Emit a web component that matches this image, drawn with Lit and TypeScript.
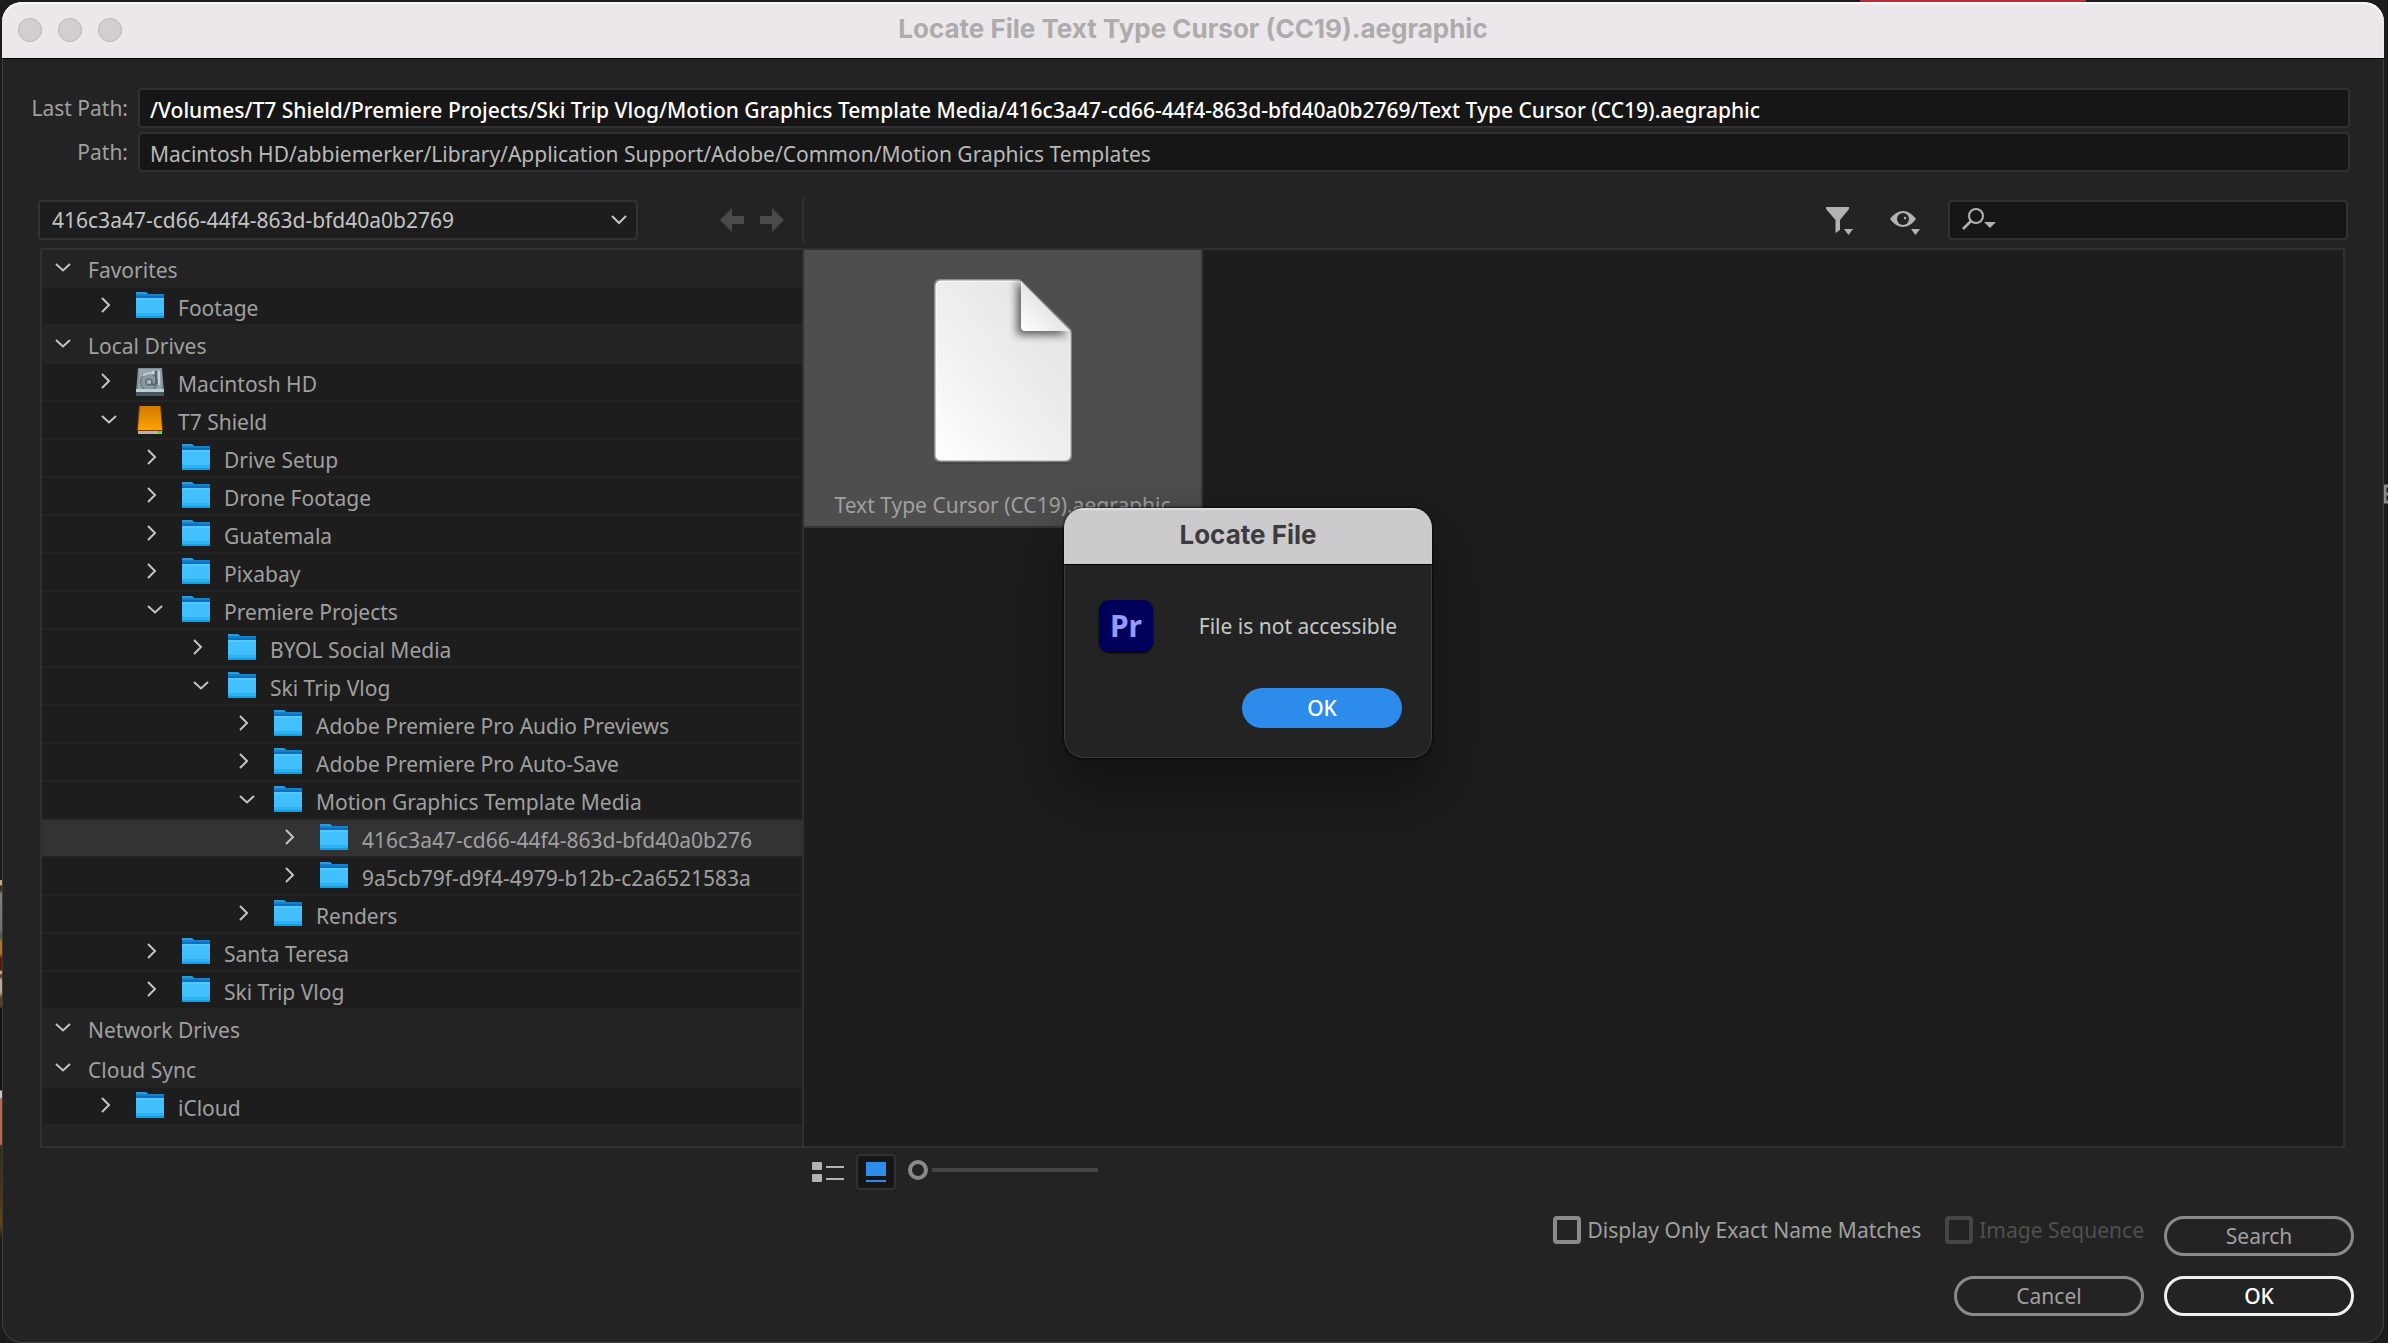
import { LitElement, html, css, svg, nothing } from "lit";
import { customElement, property, state } from "lit/decorators.js";
import { classMap } from "lit/directives/class-map.js";
import { styleMap } from "lit/directives/style-map.js";

type IconKind = "folder" | "disk" | "shield";

interface Entry {
  label: string;
  depth: number;
  open?: boolean;
  icon?: IconKind;
  selected?: boolean;
  spaced?: boolean;
}

const ENTRIES: Entry[] = [
  { label: "Favorites", depth: 0, open: true },
  { label: "Footage", depth: 1, icon: "folder" },
  { label: "Local Drives", depth: 0, open: true },
  { label: "Macintosh HD", depth: 1, icon: "disk" },
  { label: "T7 Shield", depth: 1, open: true, icon: "shield" },
  { label: "Drive Setup", depth: 2, icon: "folder" },
  { label: "Drone Footage", depth: 2, icon: "folder" },
  { label: "Guatemala", depth: 2, icon: "folder" },
  { label: "Pixabay", depth: 2, icon: "folder" },
  { label: "Premiere Projects", depth: 2, open: true, icon: "folder" },
  { label: "BYOL Social Media", depth: 3, icon: "folder" },
  { label: "Ski Trip Vlog", depth: 3, open: true, icon: "folder" },
  { label: "Adobe Premiere Pro Audio Previews", depth: 4, icon: "folder" },
  { label: "Adobe Premiere Pro Auto-Save", depth: 4, icon: "folder" },
  { label: "Motion Graphics Template Media", depth: 4, open: true, icon: "folder" },
  { label: "416c3a47-cd66-44f4-863d-bfd40a0b276", depth: 5, icon: "folder", selected: true },
  { label: "9a5cb79f-d9f4-4979-b12b-c2a6521583a", depth: 5, icon: "folder" },
  { label: "Renders", depth: 4, icon: "folder" },
  { label: "Santa Teresa", depth: 2, icon: "folder" },
  { label: "Ski Trip Vlog", depth: 2, icon: "folder" },
  { label: "Network Drives", depth: 0, open: true, spaced: true },
  { label: "Cloud Sync", depth: 0, open: true },
  { label: "iCloud", depth: 1, icon: "folder" },
];

const folderIcon = html`
  <svg width="28" height="26" viewBox="0 0 28 26" aria-hidden="true">
    <path d="M0 0H10L12 2H28V26H0Z" fill="#1383cc" />
    <path d="M0 0H10L12 2H0Z" fill="#2b9bdc" />
    <rect y="4" width="28" height="2" fill="#0b6fc4" />
    <rect y="6" width="28" height="18" fill="#41c0fd" />
    <rect y="6" width="28" height="2" fill="#58c8fb" />
    <rect y="21" width="28" height="3" fill="#2bb2f5" />
    <rect y="24" width="28" height="2" fill="#109fe2" />
  </svg>
`;

const diskIcon = html`
  <svg width="28" height="28" viewBox="0 0 28 28" aria-hidden="true">
    <path d="M2 0H26L28 24H0Z" fill="#7d8b93" />
    <path d="M3 1H25L26 23H2Z" fill="#98a6ae" />
    <circle cx="13" cy="14" r="8.5" fill="#8b9aa2" stroke="#697780" stroke-width="1.5" />
    <path d="M7 8A9 9 0 0 1 17 6" fill="none" stroke="#c6d2d8" stroke-width="1.5" />
    <circle cx="13" cy="14" r="3" fill="#aab8bf" stroke="#5f6d75" stroke-width="1.5" />
    <path d="M20 3V14Q20 18 15 16" fill="none" stroke="#56636b" stroke-width="2" />
    <path d="M17 3V6M23 3V17" stroke="#d5dfe4" stroke-width="1.5" />
    <rect y="21" width="28" height="3" fill="#b4d0da" />
    <rect y="24" width="28" height="4" fill="#4b545a" />
  </svg>
`;

const shieldIcon = html`
  <svg width="28" height="28" viewBox="0 0 28 28" aria-hidden="true">
    <defs>
      <linearGradient id="amber" x1="0" y1="0" x2="0" y2="1">
        <stop offset="0" stop-color="#cf7800" />
        <stop offset="1" stop-color="#ffa300" />
      </linearGradient>
    </defs>
    <path d="M3 0H25L27 24H1Z" fill="#7d4a05" />
    <path d="M4 0H24L26 24H2Z" fill="url(#amber)" />
    <rect x="1" y="24" width="26" height="1" fill="#7a3d00" />
    <rect x="2" y="25" width="24" height="3" fill="#b9b2a6" />
    <rect x="22" y="25" width="3" height="2" fill="#2fdc2f" />
  </svg>
`;

const ICONS = { folder: folderIcon, disk: diskIcon, shield: shieldIcon };

const caret = (x: number, y: number, w: number, h: number) =>
  svg`<path d="M${x} ${y}H${x + w}L${x + w / 2} ${y + h}Z" fill="#b2b2b2" />`;

@customElement("folder-tree")
export class FolderTree extends LitElement {
  @property({ attribute: false }) entries: Entry[] = [];

  static styles = css`
    :host {
      display: block;
      background: #232323;
    }
    .list {
      list-style: none;
      margin: 0;
      padding: 0;
    }
    .row {
      box-sizing: border-box;
      height: 38px;
      border-bottom: 2px solid #232323;
      background: #1d1d1d;
      background-clip: padding-box;
      display: flex;
      align-items: center;
    }
    .heading {
      background: #232323;
    }
    .spaced {
      margin-bottom: 2px;
    }
    .selected {
      background: #333;
      background-clip: padding-box;
    }
    .toggle {
      flex: none;
      width: 16px;
      height: 34px;
      margin: 0 0 2px 13px;
      padding: 0;
      border: 0;
      background: none;
      display: flex;
      align-items: center;
    }
    .name {
      display: flex;
      align-items: center;
      gap: 14px;
      margin-left: 19px;
      min-width: 0;
      color: #a0a0a0;
      font-size: 21px;
      line-height: 32px;
      white-space: nowrap;
    }
    .heading .name {
      margin-left: 17px;
    }
    .text {
      padding-top: 4px;
    }
    .glyph {
      width: 28px;
      height: 28px;
      display: flex;
      align-items: flex-start;
    }
  `;

  render() {
    return html`
      <ul class="list" role="tree">
        ${this.entries.map(
          (e) => html`
            <li
              role="treeitem"
              aria-selected=${e.selected ? "true" : "false"}
              class=${classMap({
                row: true,
                heading: e.depth === 0,
                selected: !!e.selected,
                spaced: !!e.spaced,
              })}
              style=${styleMap({ paddingLeft: `${e.depth * 46}px` })}
            >
              <button class="toggle" aria-label=${`${e.open ? "Collapse" : "Expand"} ${e.label}`}>
                <svg width="16" height="16" viewBox="0 0 16 16" fill="none" stroke="#c4c4c4" stroke-width="2">
                  <path d=${e.open ? "M1 5L8 11.500L15 5" : "M1 1L8 8L1 15"} />
                </svg>
              </button>
              <span class="name">
                ${e.icon ? html`<span class="glyph">${ICONS[e.icon]}</span>` : nothing}
                <span class="text">${e.label}</span>
              </span>
            </li>
          `,
        )}
      </ul>
    `;
  }
}

@customElement("alert-dialog")
export class AlertDialog extends LitElement {
  static styles = css`
    :host {
      display: block;
      width: 368px;
      border-radius: 20px;
      background: #232323;
      box-shadow: 0 0 2px 1px rgba(0, 0, 0, 0.6), 0 30px 60px 10px rgba(0, 0, 0, 0.35);
      overflow: hidden;
    }
    .bar {
      height: 57px;
      box-sizing: border-box;
      margin: 0;
      padding-bottom: 2px;
      display: flex;
      align-items: center;
      justify-content: center;
      background: #cdcacd;
      box-shadow: inset 0 2px 1px #dedcde;
      border-bottom: 1px solid #000;
      color: #3d3b3d;
      font: 700 26px/32px Inter, sans-serif;
    }
    .content {
      box-sizing: border-box;
      height: 193px;
      padding: 35px 29px 29px 34px;
      border: 1px solid #3a3a3a;
      border-top: 0;
      border-radius: 0 0 20px 20px;
      display: flex;
      flex-direction: column;
      justify-content: space-between;
    }
    .message {
      display: flex;
      align-items: center;
      justify-content: space-between;
      padding-right: 5px;
      color: #c8c8c8;
      font-size: 21px;
      line-height: 32px;
    }
    .logo {
      width: 54px;
      height: 52px;
      border-radius: 10px;
      background: #00005b;
      box-shadow: 0 1px 2px #000;
      color: #9999ff;
      display: flex;
      align-items: center;
      justify-content: center;
      font-size: 30px;
      font-weight: 700;
    }
    .ok {
      align-self: flex-end;
      width: 160px;
      height: 40px;
      border: 0;
      border-radius: 20px;
      background: #2d8ceb;
      color: #fff;
      font: 500 21px/32px "Noto Sans", sans-serif;
    }
  `;

  render() {
    return html`
      <h2 class="bar">Locate File</h2>
      <div class="content">
        <div class="message">
          <span class="logo">Pr</span>
          <span>File is not accessible</span>
        </div>
        <button class="ok">OK</button>
      </div>
    `;
  }
}

@customElement("app-root")
export class AppRoot extends LitElement {
  @state() private lastPath =
    "/Volumes/T7 Shield/Premiere Projects/Ski Trip Vlog/Motion Graphics Template Media/416c3a47-cd66-44f4-863d-bfd40a0b2769/Text Type Cursor (CC19).aegraphic";
  @state() private path =
    "Macintosh HD/abbiemerker/Library/Application Support/Adobe/Common/Motion Graphics Templates";

  static styles = css`
    :host {
      display: block;
      position: relative;
      box-sizing: border-box;
      min-height: 100vh;
      padding: 2px 4px 0 2px;
      background: #1b1b1b;
      font-family: "Noto Sans", sans-serif;
      font-size: 21px;
      line-height: 32px;
      color: #a0a0a0;
    }
    .behind {
      position: absolute;
      top: 0;
      left: 1860px;
      width: 226px;
      height: 30px;
      background: #b82d38;
    }
    .preview {
      position: absolute;
      top: 880px;
      left: 0;
      width: 2px;
      height: 370px;
      background: linear-gradient(
        #c9a878 0 5px,
        #3a2a1c 6px 10px,
        #7c8278 14px,
        #6e756c 50px,
        #44564c 56px,
        #b07428 62px 74px,
        #5a1a08 78px 90px,
        #d8c8a8 92px,
        #5a2a10 96px,
        #b8a8a0 100px 112px,
        #b08830 114px,
        #5a3a30 118px 127px,
        #141414 128px 210px,
        #c8c8c8 211px 217px,
        #c0664a 219px 264px,
        #3a2c20 266px,
        #4a3014 310px,
        #6a4414 342px,
        #1b1b1b 360px
      );
    }
    .edge {
      position: absolute;
      top: 484px;
      right: 0;
    }
    .window {
      position: relative;
      box-sizing: border-box;
      min-height: calc(100vh - 2px);
      border-radius: 20px;
      background: #232323;
      box-shadow: inset 0 0 0 1px #3c3c3c;
      display: flex;
      flex-direction: column;
    }
    .titlebar {
      box-sizing: border-box;
      height: 57px;
      border-bottom: 1px solid #000;
      border-radius: 20px 20px 0 0;
      background: #ece7eb;
      box-shadow: inset 0 2px 1px #fbf8fa;
      display: grid;
      grid-template-columns: 1fr auto 1fr;
      align-items: center;
      padding: 0 16px;
    }
    .lights {
      display: flex;
      gap: 16px;
    }
    .light {
      box-sizing: border-box;
      width: 24px;
      height: 24px;
      padding: 0;
      border: 1px solid #b9b4b8;
      border-radius: 50%;
      background: #d3ced2;
    }
    .title {
      margin: 0;
      padding-bottom: 2px;
      color: #aeaaad;
      font: 700 26px/32px Inter, sans-serif;
    }
    .body {
      flex: 1;
      display: flex;
      flex-direction: column;
      padding: 29px 30px 27px 36px;
    }
    .paths {
      display: grid;
      grid-template-columns: 90px 1fr;
      gap: 4px 10px;
      align-items: center;
      padding-right: 4px;
    }
    .label {
      text-align: right;
      white-space: nowrap;
      justify-self: end;
    }
    .field {
      box-sizing: border-box;
      width: 100%;
      height: 40px;
      border: 2px solid #313131;
      border-radius: 4px;
      background: #161616;
      color: #b9b9b9;
      font: inherit;
      padding: 4px 10px 0;
      outline: 0;
    }
    .bright {
      color: #fff;
      font-weight: 500;
    }
    .tools {
      display: flex;
      align-items: center;
      margin-top: 26px;
      height: 44px;
      padding-right: 6px;
    }
    .picker {
      position: relative;
      width: 600px;
      height: 40px;
      display: flex;
      align-items: center;
    }
    .select {
      box-sizing: border-box;
      width: 100%;
      height: 40px;
      appearance: none;
      border: 2px solid #333;
      border-radius: 4px;
      background: #1d1d1d;
      color: #c4c4c4;
      font: inherit;
      padding: 0 40px 0 12px;
    }
    .down {
      position: absolute;
      right: 11px;
      pointer-events: none;
    }
    .nav {
      display: flex;
      gap: 16px;
      margin-left: 82px;
    }
    .icon {
      padding: 0;
      border: 0;
      background: none;
      display: flex;
    }
    .split {
      align-self: stretch;
      width: 2px;
      margin-left: 18px;
      background: #303030;
    }
    .right {
      display: flex;
      align-items: center;
      margin-left: auto;
    }
    .filters {
      display: flex;
      gap: 36px;
      margin-right: 28px;
      padding-top: 2px;
    }
    .search {
      position: relative;
      display: flex;
      align-items: center;
      width: 400px;
    }
    .query {
      padding-left: 56px;
    }
    .lens {
      position: absolute;
      left: 14px;
    }
    .browser {
      flex: 1;
      display: grid;
      grid-template-columns: 760px 1fr;
      margin: 6px 9px 0 2px;
      border: 2px solid #303030;
      background: #1d1d1d;
    }
    .files {
      border-left: 2px solid #303030;
      display: flex;
      align-items: flex-start;
    }
    .tile {
      box-sizing: border-box;
      width: 399px;
      height: 278px;
      margin: 0;
      padding: 27px 0 0;
      border: 0 solid #363636;
      border-width: 0 2px 2px 0;
      background: #4e4e4e;
      display: flex;
      flex-direction: column;
      align-items: center;
      gap: 24px;
      white-space: nowrap;
    }
    .footer {
      display: grid;
      grid-template-columns: 766px 1fr;
    }
    .view {
      grid-column: 2;
      display: flex;
      align-items: center;
      height: 36px;
      margin: 6px 0 0 8px;
    }
    .thumbs {
      box-sizing: border-box;
      width: 40px;
      height: 36px;
      margin: 0 12px;
      padding: 0;
      border: 2px solid #313131;
      border-radius: 4px;
      background: #161616;
      display: flex;
      align-items: center;
      justify-content: center;
    }
    .zoom {
      appearance: none;
      width: 190px;
      height: 20px;
      margin: 0 0 4px;
      background: linear-gradient(#464646, #464646) right center / 166px 4px no-repeat;
    }
    .zoom::-webkit-slider-thumb {
      appearance: none;
      box-sizing: border-box;
      width: 20px;
      height: 20px;
      border: 4px solid #8a8a8a;
      border-radius: 50%;
      background: #232323;
    }
    .actions {
      display: flex;
      justify-content: flex-end;
      align-items: flex-start;
      gap: 20px;
      margin-top: 26px;
    }
    .check {
      display: flex;
      align-items: center;
      gap: 6px;
      height: 28px;
      margin-right: 4px;
      white-space: nowrap;
    }
    .box {
      appearance: none;
      box-sizing: border-box;
      width: 28px;
      height: 28px;
      margin: 0;
      border: 4px solid #8a8a8a;
      border-radius: 4px;
    }
    .dim {
      margin-right: 0;
      color: #505050;
    }
    .dim .box {
      border-color: #464646;
    }
    .pill {
      box-sizing: border-box;
      width: 190px;
      height: 40px;
      border: 3px solid #8a8a8a;
      border-radius: 20px;
      background: transparent;
      color: #a0a0a0;
      font: inherit;
      padding: 0;
      display: flex;
      align-items: center;
      justify-content: center;
    }
    .primary {
      border-color: #f0f0f0;
      color: #fff;
      font-weight: 500;
    }
    .confirm {
      margin-top: 20px;
    }
    .alert {
      position: absolute;
      top: 508px;
      left: 1064px;
    }
  `;

  private onPath(e: Event) {
    this.path = (e.target as HTMLInputElement).value;
  }

  private onLastPath(e: Event) {
    this.lastPath = (e.target as HTMLInputElement).value;
  }

  render() {
    return html`
      <div class="behind"></div>
      <div class="preview"></div>
      <svg class="edge" width="4" height="20" viewBox="0 0 4 20" fill="none" stroke="#8a8a8a" stroke-width="3" aria-hidden="true">
        <path d="M4 2H1V18H4M1 10H4" />
      </svg>
      <main class="window">
        <header class="titlebar">
          <div class="lights">
            <button class="light" aria-label="Close"></button>
            <button class="light" aria-label="Minimize"></button>
            <button class="light" aria-label="Zoom"></button>
          </div>
          <h1 class="title">Locate File Text Type Cursor (CC19).aegraphic</h1>
        </header>
        <div class="body">
          <div class="paths">
            <label class="label" for="last">Last Path:</label>
            <input class="field bright" id="last" .value=${this.lastPath} @input=${this.onLastPath} />
            <label class="label" for="path">Path:</label>
            <input class="field" id="path" .value=${this.path} @input=${this.onPath} />
          </div>

          <div class="tools">
            <div class="picker">
              <select class="select" aria-label="Folder">
                <option>416c3a47-cd66-44f4-863d-bfd40a0b2769</option>
              </select>
              <svg class="down" width="16" height="16" viewBox="0 0 16 16" fill="none" stroke="#c4c4c4" stroke-width="2" aria-hidden="true">
                <path d="M1 4L8 11L15 4" />
              </svg>
            </div>
            <div class="nav">
              <button class="icon" aria-label="Back">
                <svg width="24" height="24" viewBox="0 0 24 24"><path d="M0 12L12 0V8H24V16H12V24Z" fill="#4a4a4a" /></svg>
              </button>
              <button class="icon" aria-label="Forward">
                <svg width="24" height="24" viewBox="0 0 24 24"><path d="M24 12L12 0V8H0V16H12V24Z" fill="#4a4a4a" /></svg>
              </button>
            </div>
            <div class="split"></div>
            <div class="right">
              <div class="filters">
                <button class="icon" aria-label="Filter">
                  <svg width="28" height="28" viewBox="0 0 28 28">
                    <path d="M0 0H23V2L14 13V23L9.500 26V13L0 2Z" fill="#b2b2b2" />
                    ${caret(18, 22, 9, 6)}
                  </svg>
                </button>
                <button class="icon" aria-label="View options">
                  <svg width="30" height="28" viewBox="0 0 30 28">
                    <path d="M0 12Q6 4 13 4Q20 4 26 12Q20 20 13 20Q6 20 0 12Z" fill="#b2b2b2" />
                    <circle cx="13" cy="12" r="6" fill="#232323" />
                    <circle cx="15" cy="11" r="1.200" fill="#b2b2b2" />
                    ${caret(21, 22, 9, 6)}
                  </svg>
                </button>
              </div>
              <div class="search">
                <input class="field query" type="search" aria-label="Search files" />
                <svg class="lens" width="36" height="24" viewBox="0 0 36 24" aria-hidden="true">
                  <circle cx="14" cy="8" r="7" fill="none" stroke="#b2b2b2" stroke-width="2" />
                  <path d="M9 13L1 21" stroke="#b2b2b2" stroke-width="2.500" />
                  ${caret(22, 14, 12, 6)}
                </svg>
              </div>
            </div>
          </div>

          <section class="browser">
            <folder-tree .entries=${ENTRIES}></folder-tree>
            <div class="files">
              <figure class="tile">
                <svg width="142" height="188" viewBox="0 0 142 188" aria-hidden="true">
                  <defs>
                    <linearGradient id="paper" x1="1" y1="0" x2="0" y2="1">
                      <stop offset="0" stop-color="#e2e2e2" />
                      <stop offset="0.550" stop-color="#efefef" />
                      <stop offset="1" stop-color="#ffffff" />
                    </linearGradient>
                    <linearGradient id="fold" x1="1" y1="0" x2="0" y2="1">
                      <stop offset="0.500" stop-color="#e6e6e6" />
                      <stop offset="1" stop-color="#ffffff" />
                    </linearGradient>
                    <filter id="soft" x="-30%" y="-30%" width="160%" height="160%">
                      <feGaussianBlur stdDeviation="4" />
                    </filter>
                    <clipPath id="sheet">
                      <path d="M8 3H88L139 54V180Q139 185 134 185H8Q3 185 3 180V8Q3 3 8 3Z" />
                    </clipPath>
                  </defs>
                  <path d="M8 2H86L140 55V181Q140 187 134 187H8Q2 187 2 181V8Q2 2 8 2Z" fill="#3f3f3f" opacity="0.600" />
                  <path d="M8 2H86Q88 2 90 4L138 51Q140 53 140 56V179Q140 185 134 185H8Q2 185 2 179V8Q2 2 8 2Z" fill="#8a8a8a" />
                  <path d="M9 4H86Q88 4 89 5L137 53Q138 54 138 56V178Q138 183 133 183H9Q4 183 4 178V9Q4 4 9 4Z" fill="url(#paper)" stroke="#ffffff" />
                  <g clip-path="url(#sheet)">
                    <path d="M85 6V58H136L88 4Z" fill="#000" opacity="0.600" filter="url(#soft)" />
                  </g>
                  <path d="M89 4V50Q89 54 93 54H138Z" fill="url(#fold)" />
                </svg>
                <figcaption>Text Type Cursor (CC19).aegraphic</figcaption>
              </figure>
            </div>
          </section>

          <footer class="footer">
            <div class="view">
              <button class="icon" aria-label="List view">
                <svg width="32" height="20" viewBox="0 0 32 20" fill="#b2b2b2">
                  <rect width="10" height="8" rx="1" /><rect y="12" width="10" height="8" rx="1" />
                  <rect x="14" y="4" width="18" height="2" /><rect x="14" y="16" width="18" height="2" />
                </svg>
              </button>
              <button class="thumbs" aria-label="Thumbnail view" aria-pressed="true">
                <svg width="20" height="20" viewBox="0 0 20 20" fill="#2d8ceb">
                  <rect width="20" height="14" /><rect y="18" width="20" height="2" />
                </svg>
              </button>
              <input class="zoom" type="range" min="0" max="100" value="0" aria-label="Thumbnail size" />
            </div>
          </footer>
          <div class="actions">
            <label class="check"><input class="box" type="checkbox" />Display Only Exact Name Matches</label>
            <label class="check dim"><input class="box" type="checkbox" disabled />Image Sequence</label>
            <button class="pill">Search</button>
          </div>
          <div class="actions confirm">
            <button class="pill">Cancel</button>
            <button class="pill primary">OK</button>
          </div>
        </div>
      </main>
      <alert-dialog class="alert" role="alertdialog" aria-label="Locate File"></alert-dialog>
    `;
  }
}
